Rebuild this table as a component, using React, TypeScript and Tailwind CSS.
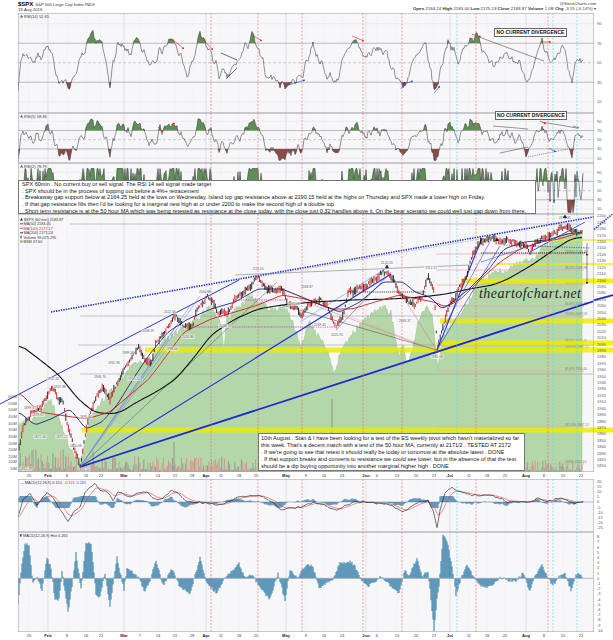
import React from "react";

type P = [number, number];

function lerp(pts: P[], x: number) {
  if (x <= pts[0][0]) return pts[0][1];
  for (let i = 1; i < pts.length; i++) {
    if (x <= pts[i][0]) {
      const [x0, y0] = pts[i - 1];
      const [x1, y1] = pts[i];
      return y0 + ((y1 - y0) * (x - x0)) / (x1 - x0);
    }
  }
  return pts[pts.length - 1][1];
}

function mulberry(seed: number) {
  let s = seed >>> 0;
  return () => {
    s += 0x6d2b79f5;
    let t = s;
    t = Math.imul(t ^ (t >>> 15), t | 1);
    t ^= t + Math.imul(t ^ (t >>> 7), t | 61);
    return ((t ^ (t >>> 14)) >>> 0) / 4294967296;
  };
}

function noise(n: number, seed: number, passes = 0) {
  const r = mulberry(seed);
  let a = Array.from({ length: n }, () => r() * 2 - 1);
  for (let p = 0; p < passes; p++) {
    const b = a;
    a = b.map((v, i) => ((b[i - 1] ?? v) + v + (b[i + 1] ?? v)) / 3);
  }
  const m = Math.max(...a.map(Math.abs)) || 1;
  return a.map((v) => v / m);
}

function range(a: number, b: number, s: number) {
  const out: number[] = [];
  for (let x = a; x <= b + 1e-6; x += s) out.push(Math.round(x * 100) / 100);
  return out;
}

const d = (pts: P[]) =>
  pts.map((p, i) => `${i ? "L" : "M"}${p[0].toFixed(1)} ${p[1].toFixed(1)}`).join("");

function smooth(pts: P[], win = 5): P[] {
  const xs = range(pts[0][0], pts[pts.length - 1][0], 1);
  const ys = xs.map((x) => lerp(pts, x));
  return xs.map((x, i) => {
    let s = 0;
    let c = 0;
    for (let k = -win; k <= win; k++) {
      const y = ys[i + k];
      if (y !== undefined) {
        s += y;
        c++;
      }
    }
    return [x, s / c] as P;
  });
}

const clamp = (v: number, a: number, b: number) => Math.max(a, Math.min(b, v));

// ---- chart data, in page pixels ----
const RED_V = [211, 258, 302, 363, 402, 476, 548];
const CYAN_V = [457, 553, 577];
const MONTHS: [number, string][] = [
  [48, "Feb"], [124, "Mar"], [206, "Apr"], [286, "May"], [366, "Jun"], [450, "Jul"], [526, "Aug"],
];
const DAYS: [number, string][] = [
  [29, "26"], [67, "8"], [86, "16"], [101, "22"], [140, "7"], [158, "14"], [175, "21"], [192, "28"],
  [221, "11"], [239, "18"], [256, "25"], [306, "9"], [324, "16"], [342, "23"], [377, "6"], [397, "13"],
  [416, "20"], [434, "27"], [469, "11"], [487, "18"], [505, "25"], [544, "8"], [563, "15"], [581, "22"],
];

const PRICE: P[] = [[19,445],[23,429],[31,412],[39,409],[45,398],[51,385],[59,402],[63,399],[68,425],[74,449],[80,467],[84,439],[92,405],[102,385],[110,399],[117,382],[125,369],[133,355],[139,345],[143,359],[151,365],[156,345],[166,329],[176,315],[184,329],[192,325],[199,309],[207,295],[215,305],[219,315],[231,309],[239,295],[250,289],[258,277],[266,289],[274,292],[282,289],[287,302],[297,309],[303,319],[309,302],[317,299],[325,305],[332,315],[336,329],[344,315],[348,292],[360,289],[372,282],[383,272],[391,275],[397,289],[407,302],[415,305],[422,299],[428,275],[434,292],[436,322],[437,350],[442,329],[450,305],[458,292],[467,275],[473,252],[481,240],[493,239],[504,242],[516,244],[524,245],[530,252],[536,242],[548,235],[555,232],[565,225],[571,232],[579,234],[582,235]];

const GREEN: P[] = [[19,425],[30,418],[39,412],[51,399],[59,419],[70,445],[80,465],[90,419],[102,399],[117,385],[133,362],[149,362],[164,339],[180,329],[196,319],[211,305],[218,318],[222,330],[224,349],[227,318],[235,309],[250,295],[266,305],[274,309],[282,305],[289,312],[301,345],[309,319],[321,339],[329,352],[334,375],[340,352],[348,339],[360,322],[372,312],[383,305],[391,312],[395,335],[399,355],[403,342],[407,365],[413,345],[418,322],[426,305],[432,312],[435,342],[438,365],[442,339],[450,325],[461,315],[469,299],[481,279],[493,272],[504,269],[520,262],[532,259],[544,245],[555,239],[567,232],[582,230]];

const MA200: P[] = [[19,344],[39,359],[59,375],[78,399],[94,412],[110,414],[121,412],[137,402],[156,392],[176,379],[196,355],[211,335],[235,319],[258,309],[282,305],[313,302],[352,300],[391,299],[422,297],[446,294],[469,289],[493,285],[508,279],[532,265],[555,249],[571,239],[582,237]];
const MA100: P[] = [[19,392],[39,412],[59,415],[86,419],[110,412],[125,399],[149,379],[164,359],[184,332],[211,319],[235,312],[258,305],[282,295],[305,299],[332,309],[352,309],[375,302],[399,295],[418,299],[434,302],[446,307],[461,299],[481,279],[500,262],[520,249],[540,242],[559,239],[582,232]];
const MA50: P[] = [[19,412],[35,425],[51,419],[70,409],[86,429],[102,422],[117,405],[133,379],[149,355],[168,332],[188,319],[211,309],[235,302],[258,289],[282,289],[297,295],[321,305],[340,312],[360,302],[383,282],[403,282],[415,292],[430,297],[442,309],[450,304],[469,289],[489,269],[504,249],[524,242],[548,240],[567,234],[582,232]];

const RSI14: P[] = [[18,30],[23,60],[35,53],[47,66],[59,35],[68,25],[78,46],[93,78],[102,66],[110,32],[117,66],[129,60],[137,71],[149,50],[160,63],[174,73],[188,35],[200,77],[211,60],[219,39],[227,35],[235,46],[252,78],[266,39],[285,27],[301,35],[313,70],[325,39],[336,32],[354,76],[364,56],[381,65],[391,49],[403,24],[415,53],[426,66],[435,19],[448,76],[458,49],[469,76],[475,78],[485,63],[497,46],[508,56],[520,49],[530,30],[542,71],[551,46],[563,66],[572,30],[577,56],[582,51]];

const MACD_B: P[] = [[18,517],[23,500],[30,493],[37,505],[47,493],[53,498],[62,512],[68,522],[73,513],[80,507],[85,493],[90,487],[95,483],[100,490],[107,492],[113,500],[118,492],[123,493],[130,497],[137,493],[147,492],[155,500],[163,498],[172,490],[180,495],[188,502],[197,502],[207,503],[217,505],[227,502],[240,497],[253,495],[263,497],[273,503],[282,510],[290,508],[300,507],[305,505],[313,502],[325,505],[336,510],[344,507],[352,502],[364,502],[375,503],[391,505],[403,512],[411,507],[420,502],[428,500],[433,510],[437,527],[440,510],[445,493],[452,487],[457,490],[463,493],[473,495],[487,495],[497,497],[507,502],[520,502],[530,502],[537,498],[547,502],[560,498],[567,500],[573,503],[582,502]];

const HIST: P[] = [[18,-5],[21.5,2],[25,6.6],[29,6],[33,-1],[37,0.3],[42,-2.2],[47,3.7],[51,2],[55,-4],[59,-4],[62,1.3],[68,-6.3],[72,-1.6],[76,4.8],[81,-2],[86,6.4],[91,6.6],[96,-2.9],[100,-3.5],[105,1],[110,-5.3],[117,3.9],[124,-2.2],[127,2],[133,1],[138,0.3],[145,-2.5],[149,-1],[156,3.4],[163,-1.4],[172,1.8],[180,-1.6],[190,-2.9],[200,3.9],[207,-1],[217,-2.9],[223,-0.4],[239,2.8],[244,0.3],[252,0.6],[262,-2.2],[270,-4],[278,1],[285,-4.2],[290,1.8],[297,0],[307,2.8],[313,2.2],[319,-1.9],[325,-1],[332,-0.4],[340,2.8],[350,3.1],[354,2.5],[362,-0.4],[368,-1.6],[375,-0.6],[381,0.3],[391,-1.6],[399,-2.9],[405,1.5],[409,0.6],[417,3.7],[422,0.3],[428,1.5],[431,-4],[434,-10],[437,-4],[439,-1.6],[443,8.3],[448,6.2],[454,0],[456,-3.4],[461,0],[467,2.5],[473,0.3],[479,-1],[485,-1.7],[493,-1.3],[500,0],[508,-0.3],[516,-0.6],[523,1],[530,-2.5],[534,0],[542,2.5],[548,0],[553,-1.3],[559,0.3],[565,0.8],[571,-2.2],[577,1],[582,0.3]];

const X1 = range(18, 583, 1);
const n14 = noise(X1.length, 7, 1);
const n5 = noise(X1.length, 19, 1);
const n2 = noise(X1.length, 23, 0);
const rsi14 = X1.map((x, i) => clamp(lerp(RSI14, x) + n14[i] * 9, 14, 86));
const rsi5 = X1.map((x, i) => clamp(50 + (rsi14[i] - 50) * 1.45 + n5[i] * 14, 5, 95));
const rsi2 = X1.map((x, i) => clamp(50 + (rsi14[i] - 50) * 2.4 + n2[i] * 40, 2, 98));

const y14 = (v: number) => 111.5 - v * 0.975;
const y5 = (v: number) => 162.7 - v * 0.46;
const y2 = (v: number) => 213.6 - v * 0.46;
const yP = (p: number) => 216 + (2200 - p) * 0.641;

// ---- shared pieces ----
function Frame({ top, h, children, grid = true }: { top: number; h: number; children?: React.ReactNode; grid?: boolean }) {
  return (
    <svg width={576} height={h} viewBox={`18 ${top} 576 ${h}`} className="block shrink-0">
      <rect x={18} y={top} width={576} height={h} fill="#f7f7fa" />
      {grid &&
        DAYS.map(([x]) => (
          <line key={x} x1={x} y1={top} x2={x} y2={top + h} stroke="#e2e2e8" strokeWidth={0.5} strokeDasharray="1 1.5" />
        ))}
      {grid &&
        MONTHS.map(([x]) => <line key={x} x1={x} y1={top} x2={x} y2={top + h} stroke="#d2d2d8" strokeWidth={0.6} />)}
      {children}
      {RED_V.map((x) => (
        <line key={x} x1={x} y1={top} x2={x} y2={top + h} stroke="#e36a6a" strokeWidth={0.6} strokeDasharray="2 1.5" />
      ))}
      {CYAN_V.map((x) => (
        <line key={x} x1={x} y1={top} x2={x} y2={top + h} stroke="#62d6e4" strokeWidth={0.7} strokeDasharray="2 1.5" />
      ))}
      <rect x={18.3} y={top + 0.3} width={575.4} height={h - 0.6} fill="none" stroke="#a9a9b2" strokeWidth={0.6} />
    </svg>
  );
}

function Axis({ top, h, ticks, children }: { top: number; h: number; ticks: [number, string][]; children?: React.ReactNode }) {
  return (
    <svg width={19} height={h} viewBox={`594 ${top} 19 ${h}`} className="block shrink-0">
      {children}
      {ticks.map(([y, t]) => (
        <text key={t + y} x={597} y={Math.min(y + 1.4, top + h - 0.4)} fontSize={4} fill="#555">
          {t}
        </text>
      ))}
    </svg>
  );
}

function Arrow({ a, c, w = 0.6 }: { a: [number, number, number, number]; c: string; w?: number }) {
  const [x1, y1, x2, y2] = a;
  const ang = Math.atan2(y2 - y1, x2 - x1);
  const s = 2.3;
  const p1 = [x2 - s * Math.cos(ang - 0.55), y2 - s * Math.sin(ang - 0.55)];
  const p2 = [x2 - s * Math.cos(ang + 0.55), y2 - s * Math.sin(ang + 0.55)];
  return (
    <g>
      <line x1={x1} y1={y1} x2={x2} y2={y2} stroke={c} strokeWidth={w} />
      <polygon points={`${x2},${y2} ${p1[0]},${p1[1]} ${p2[0]},${p2[1]}`} fill={c} />
    </g>
  );
}

function Osc({ vals, map, label, top }: { vals: number[]; map: (v: number) => number; label: string; top: number }) {
  const pts: P[] = X1.map((x, i) => [x, map(vals[i])]);
  const hi = map(70);
  const lo = map(30);
  const last = X1[X1.length - 1];
  const upper: P[] = [[X1[0], hi], ...pts.map(([x, y]) => [x, Math.min(y, hi)] as P), [last, hi]];
  const lower: P[] = [[X1[0], lo], ...pts.map(([x, y]) => [x, Math.max(y, lo)] as P), [last, lo]];
  return (
    <g>
      <line x1={18} y1={map(90)} x2={594} y2={map(90)} stroke="#e0e0e6" strokeWidth={0.5} />
      <line x1={18} y1={map(10)} x2={594} y2={map(10)} stroke="#e0e0e6" strokeWidth={0.5} />
      <line x1={18} y1={hi} x2={594} y2={hi} stroke="#a0a0a6" strokeWidth={0.7} />
      <line x1={18} y1={lo} x2={594} y2={lo} stroke="#a0a0a6" strokeWidth={0.7} />
      <line x1={18} y1={map(50)} x2={594} y2={map(50)} stroke="#b0b0b6" strokeWidth={0.6} strokeDasharray="3 2" />
      <path d={d(upper) + "Z"} fill="#5f8f57" />
      <path d={d(lower) + "Z"} fill="#8c4c46" />
      <path d={d(pts)} fill="none" stroke="#3a3a3a" strokeWidth={0.55} />
      <polygon points={`20,${top + 4.6} 21.6,${top + 1.8} 23.2,${top + 4.6}`} fill="#4c7a45" />
      <text x={24} y={top + 4.6} fontSize={4} fill="#333">
        {label}
      </text>
    </g>
  );
}

const oscTicks = (map: (v: number) => number): [number, string][] =>
  [90, 70, 50, 30, 10].map((v) => [map(v), String(v)]);

// ---- price panel ----
const XP = range(19, 583, 1.3);
const npm = noise(XP.length, 31, 1);
const nrb = mulberry(41);
const candles = XP.map((x, i) => {
  const mid = lerp(PRICE, x) + npm[i] * 4;
  const hl = 1 + nrb() * 3;
  const up = nrb() > 0.5;
  return { x, t: mid - hl, b: mid + hl, c: up ? "#1b1b1b" : "#cf2020" };
});
const ng = noise(X1.length, 53, 0);
const greenPts: P[] = X1.filter((x) => x <= 582).map((x, i) => [x, lerp(GREEN, x) + ng[i] * 3.5 + 1.5]);
const nv = mulberry(61);
const vols = XP.map((x) => {
  const r = nv();
  const k = x < 100 ? 1.5 : x < 300 ? 1 : 0.75;
  return { x, h: (2 + r * r * 14) * k, c: nv() < 0.55 ? "#d98888" : "#8d8d8d" };
});

const FIB: [number, string][] = [
  [254, "23.6% 2145.40"], [270, "38.2% 2118.98"], [285, "50.0% 2093.09"], [306, "61.8% 2059.28"],
  [316, "78.6% 2047.03"], [343, "88.6% 2001.66"], [349, "100.0% 1992.01"], [371, "61.8% 1955.60"],
  [427, "161.8% 1867.12"], [464, "100% 1810.10"],
];
const BANDS: [number, number, number][] = [
  [240, 548, 1.4], [264, 497, 1.6], [281, 461, 5], [321, 440, 5], [343, 440, 5], [350, 145, 5], [430, 82, 5],
];
const PLABELS: [number, number, string][] = [
  [26, 470, "1812.29"], [30, 409, "1899.67"], [53, 380, "1947.20"], [60, 388, "1927.88"], [38, 416, "1878.67"],
  [40, 438, "1872.40"], [62, 438, "1872.21"], [86, 418, "1891.00"], [76, 447, "1820.66"], [84, 471, "1810.10"],
  [100, 378, "1946.70"], [114, 364, "1962.96"], [128, 354, "1989.15"], [134, 380, "1933.20"], [148, 332, "2008.39"],
  [170, 313, "2021.60"], [172, 350, "1998.00"], [205, 293, "2056.88"], [188, 338, "2033.80"], [258, 270, "2111.05"],
  [307, 288, "2084.87"], [320, 326, "2039.45"], [337, 336, "2025.91"], [387, 264, "2120.55"], [431, 269, "2112.12"],
  [405, 322, "2063.37"], [437, 358, "1991.68"], [565, 219, "2193.81"], [225, 327, "2039.74"], [294, 305, "2072.05"],
];
const TRENDS: { a: [number, number, number, number]; c: string; w: number; dash?: string }[] = [
  { a: [51, 312, 613, 213.5], c: "#1f2fd8", w: 1.6, dash: "1.4 1.1" },
  { a: [0, 404, 239, 280], c: "#2a36d4", w: 1 },
  { a: [80, 467, 613, 295], c: "#1a28d6", w: 1.8 },
  { a: [80, 467, 391, 274], c: "#2232d8", w: 1.1 },
  { a: [80, 467, 200, 296], c: "#6f7ae6", w: 0.5 },
  { a: [80, 467, 190, 306], c: "#6f7ae6", w: 0.5 },
  { a: [80, 467, 176, 326], c: "#6f7ae6", w: 0.5 },
  { a: [80, 467, 166, 350], c: "#6f7ae6", w: 0.5 },
  { a: [80, 467, 277, 282], c: "#555", w: 0.5 },
  { a: [437, 350, 482, 238], c: "#2232d8", w: 1.1 },
  { a: [437, 350, 500, 246], c: "#3a48dc", w: 0.7 },
  { a: [442, 331, 492, 238], c: "#3a48dc", w: 0.6 },
  { a: [336, 330, 391, 272], c: "#4b58de", w: 0.6 },
  { a: [300, 322, 387, 268], c: "#6f7ae6", w: 0.5 },
  { a: [530, 252, 585, 222], c: "#2232d8", w: 0.8 },
  { a: [481, 262, 560, 236], c: "#4b58de", w: 0.6 },
  { a: [235, 275, 470, 265], c: "#7d7d7d", w: 0.6 },
  { a: [258, 277, 481, 239], c: "#8a8a8a", w: 0.5, dash: "1.5 1" },
  { a: [282, 305, 437, 350], c: "#555", w: 0.6 },
  { a: [387, 271, 437, 351], c: "#e07070", w: 0.5 },
  { a: [300, 300, 437, 351], c: "#e07070", w: 0.5 },
  { a: [258, 280, 437, 351], c: "#eaa0a0", w: 0.5 },
  { a: [504, 245, 590, 248], c: "#333", w: 0.6, dash: "1.4 1" },
];

function PricePlot() {
  const g = [...greenPts, [582, 472] as P, [19, 472] as P];
  return (
    <Frame top={214} h={258}>
      <path d={d(g) + "Z"} fill="#b4d7a9" stroke="#93c086" strokeWidth={0.5} />
      {vols.map((v) => (
        <line key={v.x} x1={v.x} y1={472} x2={v.x} y2={472 - v.h} stroke={v.c} strokeWidth={0.8} />
      ))}
      <line x1={174} y1={472} x2={174} y2={442} stroke="#7c7c7c" strokeWidth={0.7} />
      <line x1={332} y1={472} x2={332} y2={399} stroke="#6c6c6c" strokeWidth={0.6} />
      <line x1={70} y1={224} x2={580} y2={224} stroke="#8c8c8c" strokeWidth={0.5} />
      <line x1={80} y1={316} x2={440} y2={316} stroke="#8c8c8c" strokeWidth={0.5} />
      <line x1={78} y1={345} x2={594} y2={345} stroke="#8c8c8c" strokeWidth={0.5} />
      <line x1={80} y1={374} x2={594} y2={374} stroke="#8c8c8c" strokeWidth={0.5} />
      {FIB.map(([y, t]) => (
        <g key={t}>
          <line x1={436} y1={y} x2={584} y2={y} stroke="#eaa3a3" strokeWidth={0.7} />
          <text x={565} y={y - 0.6} fontSize={3.3} fill="#7a7a7a">
            {t}
          </text>
        </g>
      ))}
      {BANDS.map(([y, x, h]) => (
        <rect key={y} x={x} y={y - h / 2} width={594 - x} height={h} fill="#ecec00" opacity={0.82} />
      ))}
      <line x1={239} y1={300} x2={285} y2={300} stroke="#e040e0" strokeWidth={1} strokeDasharray="1 0.8" />
      <line x1={192} y1={327} x2={336} y2={327} stroke="#e040e0" strokeWidth={1} strokeDasharray="1 0.8" />
      <line x1={348} y1={292} x2={426} y2={292} stroke="#222" strokeWidth={0.8} strokeDasharray="1.2 0.9" />
      <line x1={481} y1={253} x2={587} y2={253} stroke="#111" strokeWidth={0.9} strokeDasharray="1.2 0.9" />
      {TRENDS.map((t, i) => (
        <line key={i} x1={t.a[0]} y1={t.a[1]} x2={t.a[2]} y2={t.a[3]} stroke={t.c} strokeWidth={t.w} strokeDasharray={t.dash} />
      ))}
      <path d={d(smooth(MA200, 6))} fill="none" stroke="#111" strokeWidth={1.1} />
      <path d={d(smooth(MA100, 4))} fill="none" stroke="#d61f1f" strokeWidth={0.9} />
      <path d={d(smooth(MA50, 3))} fill="none" stroke="#1c2677" strokeWidth={0.9} />
      {candles.map((c) => (
        <line key={c.x} x1={c.x} y1={c.t} x2={c.x} y2={c.b} stroke={c.c} strokeWidth={0.9} />
      ))}
      {PLABELS.map(([x, y, t]) => (
        <g key={t}>
          <rect x={x - 6.5} y={y - 3.3} width={13} height={4} fill="#ffffff" opacity={0.75} />
          <text x={x} y={y} fontSize={3.3} fill="#555" textAnchor="middle">
            {t}
          </text>
        </g>
      ))}
      <Arrow a={[587, 243, 587, 256]} c="#222" w={0.5} />
      <Arrow a={[587, 256, 587, 284]} c="#222" w={0.5} />
      <polygon points="563,218 565,214.5 567,218" fill="#222" />
      <polygon points="495,241 497,237.5 499,241" fill="#222" />
      <polygon points="385,268 387,264.5 389,268" fill="#222" />
      <text x={479} y={298} fontSize={14} fontStyle="italic" fill="#1e1e1e" textLength={102} fontFamily="'Liberation Serif', 'DejaVu Serif', serif">
        theartofchart.net
      </text>
      <g fontSize={3.8} fill="#333">
        <polygon points="20,220.5 21.5,217.8 23,220.5" fill="#333" />
        <text x={24} y={220.5}>$SPX (60 min) 2183.87</text>
        <line x1={20} y1={223.8} x2={23} y2={223.8} stroke="#1c2677" strokeWidth={0.8} />
        <text x={23.5} y={225}>MA(50) 2183.05</text>
        <line x1={20} y1={228.3} x2={23} y2={228.3} stroke="#d61f1f" strokeWidth={0.8} />
        <text x={23.5} y={229.5} fill="#d61f1f">MA(100) 2177.17</text>
        <line x1={20} y1={232.8} x2={23} y2={232.8} stroke="#111" strokeWidth={0.8} />
        <text x={23.5} y={234}>MA(200) 2171.24</text>
        <rect x={20.2} y={235.8} width={1.6} height={2.6} fill="#777" />
        <text x={23.5} y={238.5}>Volume 99,075,295</text>
        <rect x={20.2} y={240.3} width={2.5} height={2.6} fill="#8cbf7d" />
        <text x={23.5} y={243}>BSM 37.60</text>
      </g>
    </Frame>
  );
}

const VOL_L: [string, number][] = [
  ["600M", 397], ["550M", 404], ["500M", 410], ["450M", 417], ["400M", 424], ["350M", 430],
  ["300M", 437], ["250M", 444], ["200M", 450], ["150M", 457], ["100M", 462], ["50M", 468.5],
];

function PriceGutter() {
  return (
    <svg width={18} height={258} viewBox="0 214 18 258" className="block shrink-0">
      <line x1={0} y1={404} x2={239} y2={280} stroke="#2a36d4" strokeWidth={1} />
      {VOL_L.map(([t, y]) => (
        <text key={t} x={17} y={y + 1.2} fontSize={3.5} fill="#555" textAnchor="end">
          {t}
        </text>
      ))}
    </svg>
  );
}

const priceTicks: [number, string][] = range(1810, 2200, 10).map((p) => [yP(p), String(p)]);

// ---- MACD ----
const nm = noise(X1.length, 71, 1);
const macdB = X1.map((x, i) => lerp(MACD_B, x) + nm[i] * 1.2);
const macdR: number[] = [];
macdB.forEach((v, i) => macdR.push(i ? macdR[i - 1] + (v - macdR[i - 1]) * 0.16 : v));
const nh = noise(X1.length, 83, 0);
const histV = X1.map((x, i) => lerp(HIST, x) + nh[i] * 0.3);

function MacdPlot() {
  const blk: P[] = X1.map((x, i) => [x, macdB[i]]);
  const red: P[] = X1.map((x, i) => [x, macdR[i]]);
  return (
    <Frame top={479} h={53}>
      <line x1={18} y1={502} x2={594} y2={502} stroke="#9aa3b8" strokeWidth={0.7} />
      {X1.map((x, i) => (
        <line key={x} x1={x} y1={502} x2={x} y2={502 - clamp((macdR[i] - macdB[i]) * 1.4, -6, 6)} stroke="#2b73a0" strokeWidth={0.9} />
      ))}
      <path d={d(red)} fill="none" stroke="#e04848" strokeWidth={0.6} />
      <path d={d(blk)} fill="none" stroke="#1a1a1a" strokeWidth={0.6} />
      <text x={20} y={484} fontSize={3.8} fill="#333">
        — MACD(12,26,9) 0.152, <tspan fill="#d63030">-0.113,</tspan> <tspan fill="#4a5ad8">0.265</tspan>
      </text>
    </Frame>
  );
}

function HistPlot() {
  return (
    <Frame top={532} h={100}>
      {X1.filter((x) => x <= 582).map((x, i) => (
        <line key={x} x1={x} y1={578.3} x2={x} y2={578.3 - histV[i] * 5.33} stroke="#2c78a2" strokeWidth={1} />
      ))}
      <line x1={18} y1={578.3} x2={594} y2={578.3} stroke="#9aa3b8" strokeWidth={0.7} />
      <rect x={20} y={534} width={1.6} height={2.6} fill="#555" />
      <text x={23} y={536.6} fontSize={3.8} fill="#333">
        MACD(12,26,9) Hist 0.265
      </text>
    </Frame>
  );
}

function DateRow({ top, h }: { top: number; h: number }) {
  return (
    <svg width={613} height={h} viewBox={`0 ${top} 613 ${h}`} className="block">
      {DAYS.map(([x, t]) => (
        <text key={x} x={x} y={top + 5.2} fontSize={4.1} fill="#444" textAnchor="middle">
          {t}
        </text>
      ))}
      {MONTHS.map(([x, t]) => (
        <text key={t} x={x} y={top + 5.2} fontSize={4.1} fill="#222" fontWeight="bold" textAnchor="middle">
          {t}
        </text>
      ))}
    </svg>
  );
}

const NOTE1 = [
  "SPX 60min . No current buy or sell signal. The RSI 14 sell signal made target",
  ". SPX should be in the process of topping out before a 4%+ retracement",
  ". Breakaway gap support below at 2164.25 held at the lows on Wednesday. Island top gap resistance above at 2190.15 held at the highs on Thursday and SPX made a lower high on Friday.",
  ". If that gap resistance fills then I'd be looking for a marginal new high at or under 2200 to make the second high of a double top",
  ". Short term resistance is at the 50 hour MA which was being retested as resistance at the close today, with the close just 0.32 handles above it. On the bear scenario we could well just gap down from there.",
];
const NOTE2 = [
  "10th August . Stan & I have been looking for a test of the ES weekly pivot which hasn't materialized so far",
  "this week. That's a decent match with a test of the 50 hour MA, currently at 2171/2 . TESTED AT 2172",
  ". If we're going to see that retest it should really be today or tomorrow at the absolute latest . DONE",
  ". If that support breaks and converts to resistance we could see lower, but in the absence of that the test",
  "should be a dip buying opportunity into another marginal higher high . DONE",
];

export default function App() {
  return (
    <div className="relative h-[640px] w-[613px] overflow-hidden bg-white font-['Liberation_Sans',Arial,sans-serif] text-[#333]">
      {/* header */}
      <div className="flex h-[13px] items-start justify-between pl-[18px] pr-[17px] pt-[1px] text-[4.2px] leading-[5.4px]">
        <div>
          <div className="flex items-baseline gap-[2px]">
            <span className="text-[6px] font-bold leading-[6px] text-black">$SPX</span>
            <span>S&amp;P 500 Large Cap Index INDX</span>
          </div>
          <div>19-Aug-2016</div>
        </div>
        <div className="flex flex-col items-end">
          <div>@StockCharts.com</div>
          <div className="text-[4.4px]">
            <b>Open</b> 2184.24 <b>High</b> 2185.00 <b>Low</b> 2175.13 <b>Close</b> 2183.87 <b>Volume</b> 1.0B{" "}
            <b>Chg</b> -3.15 (-0.14%) ▾
          </div>
        </div>
      </div>

      {/* RSI 14 */}
      <div className="flex h-[100px]">
        <div className="w-[18px] shrink-0" />
        <Frame top={13} h={100}>
          <Osc vals={rsi14} map={y14} label="RSI(14) 52.65" top={13} />
          <line x1={221} y1={53} x2={237} y2={60} stroke="#111" strokeWidth={0.6} />
          <line x1={226} y1={79} x2={237} y2={68} stroke="#111" strokeWidth={0.6} />
          <line x1={479} y1={37} x2={544} y2={61} stroke="#333" strokeWidth={0.5} />
          <Arrow a={[172, 39, 184, 49]} c="#e02020" />
          <Arrow a={[200, 36, 213, 50]} c="#e02020" />
          <Arrow a={[252, 35, 262, 41]} c="#e02020" />
          <Arrow a={[352, 36, 364, 41]} c="#e02020" />
          <Arrow a={[472, 34, 481, 37]} c="#e02020" />
          <Arrow a={[542, 42, 551, 42]} c="#e02020" />
          <Arrow a={[285, 86, 305, 80]} c="#2040e0" />
          <Arrow a={[401, 89, 405, 82]} c="#2040e0" />
          <Arrow a={[407, 83, 413, 81]} c="#2040e0" />
          <Arrow a={[434, 93, 440, 86]} c="#2040e0" />
        </Frame>
        <Axis top={13} h={100} ticks={oscTicks(y14)} />
      </div>

      {/* RSI 5 */}
      <div className="flex h-[50px]">
        <div className="w-[18px] shrink-0" />
        <Frame top={113} h={50}>
          <Osc vals={rsi5} map={y5} label="RSI(5) 58.36" top={113} />
          <line x1={493} y1={126} x2={528} y2={129} stroke="#333" strokeWidth={0.5} />
          <line x1={500} y1={153} x2={528} y2={147} stroke="#333" strokeWidth={0.5} />
          <line x1={528} y1={157} x2={573} y2={148} stroke="#333" strokeWidth={0.5} strokeDasharray="1.2 1" />
          <line x1={542} y1={122} x2={577} y2={128} stroke="#333" strokeWidth={0.5} />
          <Arrow a={[158, 127, 163, 132]} c="#e02020" />
          <Arrow a={[171, 125, 175, 123]} c="#e02020" />
          <Arrow a={[540, 121, 546, 124]} c="#e02020" />
          <Arrow a={[573, 126, 579, 128]} c="#e02020" />
          <Arrow a={[549, 148, 556, 152]} c="#2040e0" />
        </Frame>
        <Axis top={113} h={50} ticks={oscTicks(y5)} />
      </div>

      {/* RSI 2 */}
      <div className="flex h-[51px]">
        <div className="w-[18px] shrink-0" />
        <Frame top={163} h={51}>
          <Osc vals={rsi2} map={y2} label="RSI(2) 78.79" top={163} />
        </Frame>
        <Axis top={163} h={51} ticks={oscTicks(y2)} />
      </div>

      {/* price */}
      <div className="flex h-[258px]">
        <PriceGutter />
        <PricePlot />
        <Axis top={214} h={258} ticks={priceTicks}>
          {BANDS.map(([y, , h]) => (
            <rect key={y} x={594} y={y - h / 2} width={19} height={h} fill="#f4f400" />
          ))}
          <line x1={594} y1={229.4} x2={613} y2={213.5} stroke="#1f2fd8" strokeWidth={1.6} strokeDasharray="1.4 1.1" />
          <line x1={594} y1={300.2} x2={613} y2={295} stroke="#1a28d6" strokeWidth={1.8} />
        </Axis>
      </div>

      <DateRow top={472} h={7} />

      {/* MACD */}
      <div className="flex h-[53px]">
        <div className="w-[18px] shrink-0" />
        <MacdPlot />
        <Axis
          top={479}
          h={53}
          ticks={[20, 15, 10, 5, 0, -5, -10, -15, -20, -25].map((v) => [502 - v * 1.02, String(v)] as [number, string])}
        />
      </div>

      {/* MACD hist */}
      <div className="flex h-[100px]">
        <div className="w-[18px] shrink-0" />
        <HistPlot />
        <Axis
          top={532}
          h={100}
          ticks={range(-10, 8, 1).map((v) => [578.3 - v * 5.2, String(v)] as [number, string])}
        />
      </div>

      <DateRow top={632} h={8} />

      {/* overlays */}
      <div className="absolute left-[494px] top-[28px] flex h-[9px] w-[73px] items-center justify-center whitespace-nowrap border border-[#666] bg-white text-[5px] font-bold text-[#111]">
        NO CURRENT DIVERGENCE
      </div>
      <div className="absolute left-[495px] top-[111px] flex h-[9px] w-[72px] items-center justify-center whitespace-nowrap border border-[#666] bg-white text-[5px] font-bold text-[#111]">
        NO CURRENT DIVERGENCE
      </div>
      <div className="absolute left-[18px] top-[180px] h-[34px] w-[518px] whitespace-nowrap border border-[#777] bg-white px-[3px] pt-[0.3px] text-[5.55px] leading-[6.6px] text-[#151515]">
        {NOTE1.map((l) => (
          <div key={l}>{l}</div>
        ))}
      </div>
      <div className="absolute left-[258px] top-[433px] h-[38px] w-[267px] whitespace-nowrap border border-[#777] bg-white px-[2px] pt-[1px] text-[5.55px] leading-[7px] text-[#151515]">
        {NOTE2.map((l) => (
          <div key={l}>{l}</div>
        ))}
      </div>
    </div>
  );
}
